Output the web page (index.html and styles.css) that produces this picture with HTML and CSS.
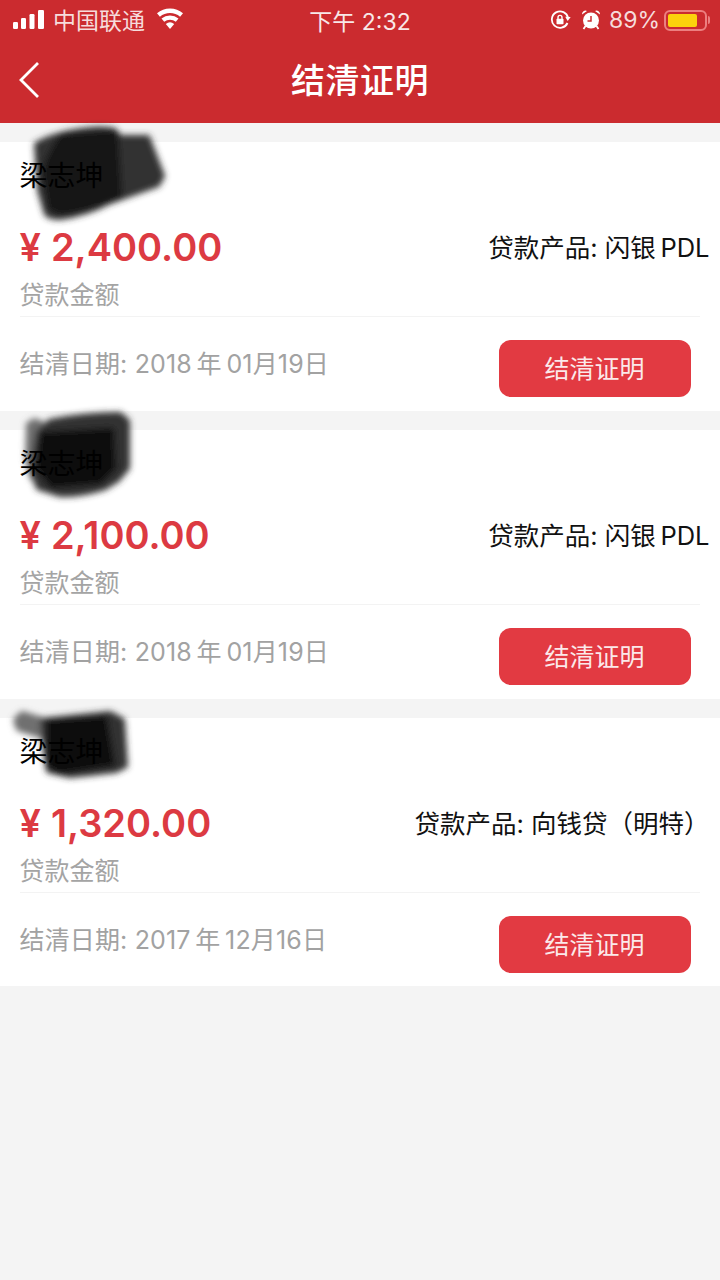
FILE: index.html
```html
<!DOCTYPE html>
<html lang="zh-CN">
<head>
<meta charset="utf-8">
<title>结清证明</title>
<link rel="stylesheet" href="styles.css">
</head>
<body>
<header class="header">
  <div class="status">
    <div class="status-left">
      <svg class="signal" width="32" height="22" viewBox="12 8 32 22"><rect x="13" y="21" width="5" height="7" rx="1.2"/><rect x="21" y="17" width="5" height="11" rx="1.2"/><rect x="29.500" y="13" width="5" height="15" rx="1.2"/><rect x="38" y="9" width="6" height="19" rx="1.2"/></svg>
      <span class="carrier">中国联通</span>
      <svg class="wifi" width="28" height="22" viewBox="0 0 28 22"><path d="M14 21l-4.200-5a6.500 6.500 0 0 1 8.400 0z"/><path d="M8.200 13.800l-2.700-3.200a13.500 13.500 0 0 1 17 0l-2.700 3.200a9.300 9.300 0 0 0-11.600 0z"/><path d="M3.900 8.700L1 5.300a20 20 0 0 1 26 0l-2.900 3.400a15.600 15.600 0 0 0-20.200 0z"/></svg>
    </div>
    <div class="status-time">下午 2:32</div>
    <div class="status-right">
      <svg class="lock" width="21" height="20" viewBox="0 0 21 20"><path class="ring" d="M17.500 13a8.200 8.200 0 1 1 .6-5"/><path class="solid" d="M15.200 6.800l5.500.2-3 4z"/><rect class="solid" x="6.500" y="8.700" width="7" height="5.500" rx=".8"/><path class="shackle" d="M8 9V7.400a2 2 0 0 1 4 0V9"/></svg>
      <svg class="alarm" width="20" height="21" viewBox="0 0 20 21"><circle class="solid" cx="10" cy="11.500" r="8"/><path class="solid" d="M1 5.500a3.500 3.500 0 0 1 5-3.500zM19 5.500a3.500 3.500 0 0 0-5-3.500z"/><path class="leg" d="M4.500 17l-2 3M15.500 17l2 3"/><path class="hand" d="M10 7v5H6.500"/></svg>
      <span class="percent">89%</span>
      <div class="battery"><div class="battery-fill"></div></div>
      <div class="battery-nub"></div>
    </div>
  </div>
  <div class="nav">
    <svg class="back" width="24" height="40" viewBox="0 0 24 40"><path d="M21 3L4 20l17 17"/></svg>
    <h1 class="title">结清证明</h1>
  </div>
</header>

<main class="list">
  <section class="card">
    <svg class="scribble" width="200" height="120" viewBox="0 112 200 120">
      <path class="ink-soft" d="M36 144Q50 136 70 132 100 126 114 130L120 137 148 137Q155 155 163 176L158 185 110 202Q85 215 60 218 50 218 46 214L39 190z"/>
      <path class="ink-dark" d="M44 172Q50 150 62 136L116 132 120 196Q90 210 60 213L50 208z"/>
    </svg>
    <div class="name">梁志坤</div>
    <div class="amount-row">
      <div class="amount"><span class="yen">¥</span>2,400.00</div>
      <div class="product">贷款产品: 闪银&thinsp;PDL</div>
    </div>
    <div class="label">贷款金额</div>
    <div class="footer">
      <div class="date">结清日期: 2018&thinsp;年&thinsp;01月19日</div>
      <button class="proof">结清证明</button>
    </div>
  </section>

  <section class="card">
    <svg class="scribble" width="200" height="120" viewBox="0 400 200 120">
      <path class="ink-grey" d="M28 424L35 420 50 427 42 488 32 478 27 460z"/>
      <path class="ink-soft" d="M50 421Q85 414 120 414L128 421 128 468 118 480 105 488Q80 496 60 495L38 488 32 470 38 432z"/>
      <path class="ink-black" d="M42 434L112 430 114 468 100 482 52 486 38 468z"/>
    </svg>
    <div class="name">梁志坤</div>
    <div class="amount-row">
      <div class="amount"><span class="yen">¥</span>2,100.00</div>
      <div class="product">贷款产品: 闪银&thinsp;PDL</div>
    </div>
    <div class="label">贷款金额</div>
    <div class="footer">
      <div class="date">结清日期: 2018&thinsp;年&thinsp;01月19日</div>
      <button class="proof">结清证明</button>
    </div>
  </section>

  <section class="card">
    <svg class="scribble" width="200" height="120" viewBox="0 690 200 120">
      <path class="ink-grey" d="M15 722L22 715 45 722 60 745 40 738 18 731z"/>
      <path class="ink-soft" d="M42 722L110 715 123 722 126 768 116 773 90 776 70 778 48 773 44 745z"/>
      <path class="ink-black" d="M48 724L105 720 113 766 60 774 48 768z"/>
    </svg>
    <div class="name">梁志坤</div>
    <div class="amount-row">
      <div class="amount"><span class="yen">¥</span>1,320.00</div>
      <div class="product">贷款产品: 向钱贷（明特）</div>
    </div>
    <div class="label">贷款金额</div>
    <div class="footer">
      <div class="date">结清日期: 2017&thinsp;年&thinsp;12月16日</div>
      <button class="proof">结清证明</button>
    </div>
  </section>
</main>
<svg class="defs" width="0" height="0"><filter id="soft"><feGaussianBlur stdDeviation="3"/></filter></svg>
</body>
</html>
```

FILE: styles.css
```css
* { box-sizing: border-box; }
html, body { margin: 0; padding: 0; }
body {
  width: 720px;
  height: 1280px;
  overflow: hidden;
  background: #f4f4f4;
  font-family: "Inter", "Noto Sans CJK SC", sans-serif;
}
.defs { position: absolute; }

.header { height: 123px; background: #cb2b2f; color: #fff; }
.status { height: 40px; display: flex; align-items: center; justify-content: space-between; font-size: 23px; }
.status-left, .status-right { width: 260px; display: flex; align-items: center; }
.status-left { padding-left: 12px; }
.status-right { justify-content: flex-end; padding-right: 10px; }
.signal { fill: #fff; }
.carrier { margin-left: 9px; margin-top: -3px; color: #f6dcdc; }
.wifi { margin-left: 11px; margin-top: -2px; fill: #fff; }
.status-time { font-size: 23px; color: #f8e8e8; margin-top: -1px; }
.lock { margin-right: 10px; }
.solid { fill: #fff; }
.ring { fill: none; stroke: #fff; stroke-width: 1.800; }
.shackle { fill: none; stroke: #fff; stroke-width: 1.400; }
.leg { fill: none; stroke: #fff; stroke-width: 1.800; }
.hand { fill: none; stroke: #cb2b2f; stroke-width: 1.500; }
.alarm { margin-right: 8px; margin-top: -2px; }
.percent { font-size: 23px; color: #f6dcdc; margin-right: 4px; margin-top: -1px; }
.battery { width: 43px; height: 21px; border: 2px solid #ec7f80; border-radius: 6px; padding: 2px 8px 2px 2px; }
.battery-fill { height: 100%; background: #fcd20c; border-radius: 2px; }
.battery-nub { width: 2px; height: 8px; margin-left: 1px; background: #ec7f80; border-radius: 0 2px 2px 0; }

.nav { height: 83px; position: relative; display: flex; align-items: center; justify-content: center; padding-bottom: 1px; }
.back { position: absolute; left: 17px; top: 20px; fill: none; stroke: #fff; stroke-width: 2.800; }
.title { margin: 0; font-size: 34px; font-weight: 500; letter-spacing: .5px; line-height: 44px; }

.list { padding-top: 19px; display: flex; flex-direction: column; gap: 19px; }
.card { position: relative; height: 269px; padding: 17px 0 0 19.500px; background: #fff; }
.card:last-child { height: 268px; }
.scribble { position: absolute; left: 0; top: -30px; overflow: visible; filter: url(#soft); }
.ink-soft, .ink-dark, .ink-grey, .ink-black { stroke-width: 4; stroke-linejoin: round; }
.ink-soft { fill: #303030; stroke: #303030; }
.ink-dark { fill: #131313; stroke: #131313; }
.ink-black { fill: #090909; stroke: #090909; }
.ink-grey { fill: #707070; stroke: #707070; }
.name { position: relative; font-size: 28px; line-height: 34px; color: #000; }
.amount-row { position: relative; display: flex; align-items: center; justify-content: space-between; height: 50px; margin-top: 29px; padding-right: 10.500px; }
.amount { font-size: 38px; font-weight: 600; color: #dc3a42; line-height: 50px; }
.yen { margin-right: 10px; }
.product { font-size: 25.500px; color: #111; margin-top: -4px; }
.label { margin-top: 8px; font-size: 25px; line-height: 30px; color: #a4a4a4; }
.footer { display: flex; align-items: center; justify-content: space-between; width: 680.500px; margin-top: 6px; padding-top: 23px; border-top: 1px solid #f3f3f3; }
.date { font-size: 25px; letter-spacing: .15px; color: #a2a2a2; margin-top: -14px; }
.proof { width: 192px; height: 57px; margin-right: 9.500px; padding: 0 0 4px; border: 0; border-radius: 12px; background: #e23a42; color: #fbe9ea; font: inherit; font-size: 25px; }
```
